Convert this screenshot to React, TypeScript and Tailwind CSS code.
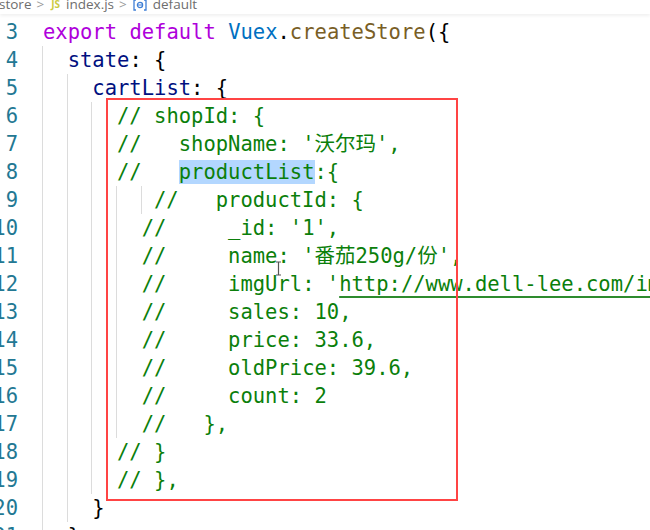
import React from "react";

type Seg = { t: string; c: string; hl?: boolean; u?: boolean };

const KW = "#af00db";
const NS = "#0070c1";
const FN = "#795e26";
const PR = "#001080";
const PU = "#000000";
const CM = "#0b7f0b";

const lines: { n: number; indent: number; segs: Seg[] }[] = [
  {
    n: 3,
    indent: 0,
    segs: [
      { t: "export default ", c: KW },
      { t: "Vuex", c: NS },
      { t: ".", c: PU },
      { t: "createStore", c: FN },
      { t: "({", c: PU },
    ],
  },
  { n: 4, indent: 2, segs: [{ t: "state", c: PR }, { t: ": {", c: PU }] },
  { n: 5, indent: 4, segs: [{ t: "cartList", c: PR }, { t: ": {", c: PU }] },
  { n: 6, indent: 6, segs: [{ t: "// shopId: {", c: CM }] },
  { n: 7, indent: 6, segs: [{ t: "//   shopName: '沃尔玛',", c: CM }] },
  {
    n: 8,
    indent: 6,
    segs: [
      { t: "//   ", c: CM },
      { t: "productList", c: CM, hl: true },
      { t: ":{", c: CM },
    ],
  },
  { n: 9, indent: 9, segs: [{ t: "//   productId: {", c: CM }] },
  { n: 10, indent: 8, segs: [{ t: "//     _id: '1',", c: CM }] },
  { n: 11, indent: 8, segs: [{ t: "//     name: '番茄250g/份',", c: CM }] },
  {
    n: 12,
    indent: 8,
    segs: [
      { t: "//     imgUrl: '", c: CM },
      { t: "http://www.dell-lee.com/imgs/vue3/tomato.png", c: CM, u: true },
      { t: "',", c: CM },
    ],
  },
  { n: 13, indent: 8, segs: [{ t: "//     sales: 10,", c: CM }] },
  { n: 14, indent: 8, segs: [{ t: "//     price: 33.6,", c: CM }] },
  { n: 15, indent: 8, segs: [{ t: "//     oldPrice: 39.6,", c: CM }] },
  { n: 16, indent: 8, segs: [{ t: "//     count: 2", c: CM }] },
  { n: 17, indent: 8, segs: [{ t: "//   },", c: CM }] },
  { n: 18, indent: 6, segs: [{ t: "// }", c: CM }] },
  { n: 19, indent: 6, segs: [{ t: "// },", c: CM }] },
  { n: 20, indent: 4, segs: [{ t: "}", c: PU }] },
  { n: 21, indent: 2, segs: [{ t: "},", c: PU }] },
];

function Line({ n, indent, segs }: { n: number; indent: number; segs: Seg[] }) {
  const units = Math.floor(indent / 2);
  const rest = indent % 2;
  return (
    <div className="flex h-[28px] leading-[28px] whitespace-pre">
      <div className="w-[18px] shrink-0 flex justify-end text-[#237893] overflow-visible">
        <span>{n}</span>
      </div>
      <div className="w-[24px] shrink-0" />
      {Array.from({ length: units }).map((_, i) => (
        <span key={i} className="block w-[2ch] shrink-0 h-full border-l border-[#dcdcdc]" />
      ))}
      {rest ? <span className="block w-[1ch] shrink-0 h-full border-l border-[#dcdcdc]" /> : null}
      <span className="block ml-[1px]">
        {segs.map((s, i) => (
          <span
            key={i}
            style={{ color: s.c }}
            className={
              (s.hl ? "bg-[#b3d7ff] " : "") +
              (s.u ? "underline decoration-[#2e8b2e] decoration-2 underline-offset-[5px]" : "")
            }
          >
            {s.t}
          </span>
        ))}
      </span>
    </div>
  );
}

export default function App() {
  return (
    <div className="relative w-[650px] h-[530px] overflow-hidden bg-white">
      <div className="h-[14px] relative z-10 bg-white shadow-[0_2px_3px_rgba(0,0,0,0.06)] overflow-hidden">
        <div
          className="flex items-center text-[13.5px] leading-[13px] text-[#6e6e6e] -mt-[2px] -ml-[1px] whitespace-pre"
          style={{ fontFamily: "'Open Sans', 'Liberation Sans', sans-serif" }}
        >
          <span>store</span>
          <span className="ml-[5px] text-[#9a9a9a]">&gt;</span>
          <span className="ml-[7px] text-[10px] font-bold text-[#cbcb41]">JS</span>
          <span className="ml-[6px]">index.js</span>
          <span className="ml-[5px] text-[#9a9a9a]">&gt;</span>
          <svg className="ml-[6px]" width="14" height="12" viewBox="0 0 14 12">
            <path d="M3 1H1v10h2M11 1h2v10h-2" fill="none" stroke="#3f7fd6" strokeWidth="1.3" />
            <circle cx="7" cy="6" r="2.6" fill="none" stroke="#3f7fd6" strokeWidth="1.3" />
            <path d="M4.5 6h5" stroke="#3f7fd6" strokeWidth="1" />
          </svg>
          <span className="ml-[6px]">default</span>
        </div>
      </div>
      <div
        className="pt-[4px] text-[20.5px]"
        style={{ fontFamily: "'DejaVu Sans Mono', 'Noto Sans CJK SC', monospace" }}
      >
        {lines.map((l) => (
          <Line key={l.n} {...l} />
        ))}
      </div>
      <div className="absolute left-[106px] top-[98px] w-[352px] h-[403px] border-2 border-[#ff4444]" />
      <svg className="absolute left-[275px] top-[261px]" width="7" height="15" viewBox="0 0 7 15">
        <path d="M1 1h5M3.5 1v13M1 14h5" stroke="#555" strokeWidth="1.2" fill="none" />
      </svg>
    </div>
  );
}
